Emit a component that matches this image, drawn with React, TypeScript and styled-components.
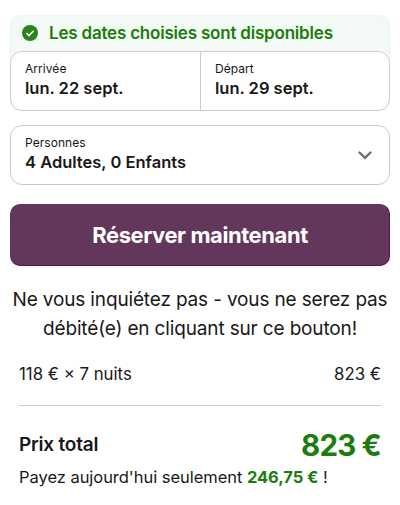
import React from 'react';
import styled, { createGlobalStyle } from 'styled-components';

const Global = createGlobalStyle`
  *, *::before, *::after { box-sizing: border-box; }
  body { margin: 0; background: #fff; }
`;

const Page = styled.main`
  width: 400px;
  height: 505px;
  padding: 15px 10px 0;
  overflow: hidden;
  background: #fff;
  color: #181818;
  font-family: Inter, 'Liberation Sans', sans-serif;
`;

const Booking = styled.section`
  border-radius: 10px;
  background: #f3f9f4;
  box-shadow: inset 0 0 0 1px #ebf4eb;
`;

const Availability = styled.div`
  display: flex;
  align-items: center;
  gap: 11px;
  height: 36px;
  padding-left: 12px;
  color: #1c7d0c;
  font-size: 17px;
  font-weight: 600;
  letter-spacing: -0.2px;
  line-height: 20px;
  white-space: nowrap;
`;

const Dates = styled.div`
  display: grid;
  grid-template-columns: 190px 1fr;
  height: 60px;
  border: 1.5px solid #cdcdcd;
  border-radius: 12px;
  background: #fff;
`;

const Field = styled.button<{ $divided?: boolean }>`
  display: flex;
  flex-direction: column;
  align-items: flex-start;
  margin: 0;
  padding: 8px 14px 0;
  border: 0;
  border-right: ${p => (p.$divided ? '1px solid #cdcdcd' : '0')};
  background: none;
  color: inherit;
  font: inherit;
  text-align: left;
  white-space: nowrap;
`;

const Label = styled.span`
  font-size: 12px;
  letter-spacing: 0.05px;
  line-height: 18px;
`;

const Value = styled.span`
  font-size: 16.5px;
  font-weight: 600;
  line-height: 20px;
`;

const Guests = styled.div`
  display: flex;
  align-items: stretch;
  justify-content: space-between;
  height: 60px;
  margin-top: 14px;
  padding-right: 17px;
  border: 1px solid #c9c9c9;
  border-radius: 12px;
`;

const Chevron = styled.svg`
  align-self: center;
`;

const Reserve = styled.button`
  display: block;
  width: 100%;
  height: 62px;
  margin-top: 19px;
  padding: 0;
  border: 1px solid;
  border-color: #63375b #56134f #56134f #63375b;
  border-radius: 10px;
  background: #63375b;
  color: #fff;
  font: 700 22px/26px Inter, sans-serif;
  letter-spacing: -0.43px;
`;

const Notice = styled.p`
  margin: 19px -10px 0;
  font-size: 19px;
  letter-spacing: -0.15px;
  line-height: 29px;
  text-align: center;
`;

const Summary = styled.section`
  margin: 19px 9px 0;
`;

const PriceLine = styled.div`
  display: flex;
  justify-content: space-between;
  height: 44px;
  border-bottom: 1px solid #c9c9c9;
  font-size: 16.8px;
  line-height: 24px;
`;

const Total = styled.div`
  display: flex;
  align-items: center;
  justify-content: space-between;
  height: 39px;
  margin-top: 19px;
  font-size: 19px;
  font-weight: 600;
  letter-spacing: -0.2px;
`;

const TotalPrice = styled.strong`
  color: #1c7d0c;
  font-size: 29.5px;
  font-weight: 700;
  letter-spacing: -0.8px;
`;

const Deposit = styled.p`
  margin: 0;
  font-size: 16.5px;
  letter-spacing: -0.04px;
  line-height: 26px;
`;

const DepositPrice = styled.strong`
  color: #1c7d0c;
  font-weight: 700;
`;

export default function App() {
  return (
    <Page>
      <Global />
      <Booking>
        <Availability>
          <svg width="16" height="16" viewBox="0 0 16 16" aria-hidden="true">
            <circle cx="8" cy="8" r="8" fill="#2b821e" />
            <path d="m4.4 8 2.5 2.5 4.8-4.8" fill="none" stroke="#fff" strokeWidth="1.6" />
          </svg>
          <span>Les dates choisies sont disponibles</span>
        </Availability>
        <Dates>
          <Field $divided><Label>Arrivée</Label><Value>lun. 22 sept.</Value></Field>
          <Field><Label>Départ</Label><Value>lun. 29 sept.</Value></Field>
        </Dates>
      </Booking>
      <Guests>
        <Field><Label>Personnes</Label><Value>4 Adultes, 0 Enfants</Value></Field>
        <Chevron width="14" height="9" viewBox="0 0 14 9" aria-hidden="true">
          <path d="m1.5 1.5 5.5 5.3 5.5-5.3" fill="none" stroke="#706d69" strokeWidth="2.4" strokeLinecap="round" />
        </Chevron>
      </Guests>
      <Reserve>Réserver maintenant</Reserve>
      <Notice>Ne vous inquiétez pas - vous ne serez pas<br />débité(e) en cliquant sur ce bouton!</Notice>
      <Summary>
        <PriceLine><span>118 € × 7 nuits</span><span>823 €</span></PriceLine>
        <Total><span>Prix total</span><TotalPrice>823 €</TotalPrice></Total>
        <Deposit>Payez aujourd'hui seulement <DepositPrice>246,75 €</DepositPrice> !</Deposit>
      </Summary>
    </Page>
  );
}
